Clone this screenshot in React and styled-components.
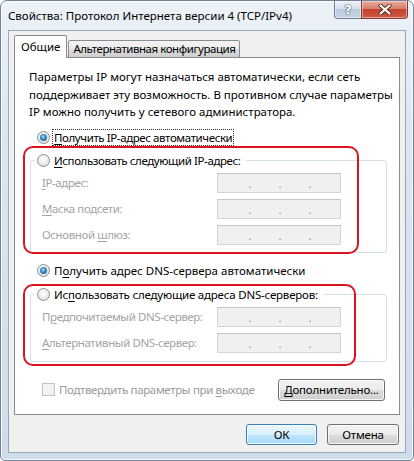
import React from "react";
import styled, { createGlobalStyle } from "styled-components";

const GlobalStyle = createGlobalStyle`
  html, body {
    margin: 0;
    padding: 0;
    background: #ffffff;
  }
  body {
    font-family: "Noto Sans", "Segoe UI", sans-serif;
    font-size: 11.5px;
    color: #000;
  }
`;

const Window = styled.div`
  width: 414px;
  height: 461px;
  box-sizing: border-box;
  display: flex;
  flex-direction: column;
  padding: 0 7px 7px 7px;
  border: 1px solid #6f8299;
  border-radius: 7px 7px 5px 5px;
  background: linear-gradient(to bottom, #edf2f8 0%, #dce6f1 30%, #cfdcea 100%);
  box-shadow: inset 0 0 0 1px rgba(255, 255, 255, 0.75);
  overflow: hidden;
`;

const TitleBar = styled.div`
  height: 29px;
  display: flex;
  justify-content: space-between;
  align-items: flex-start;
  flex-shrink: 0;
`;

const Title = styled.div`
  padding-top: 7px;
  font-size: 11.5px;
  line-height: 16px;
  color: #000;
  white-space: nowrap;
`;

const Controls = styled.div`
  display: flex;
  margin-right: -2px;
`;

const CaptionButton = styled.div`
  width: ${(p) => p.$w}px;
  height: 18px;
  box-sizing: border-box;
  border: 1px solid ${(p) => (p.$close ? "#7d3b33" : "#6f7f93")};
  border-top: none;
  border-radius: ${(p) => (p.$close ? "0 0 4px 0" : "0 0 0 4px")};
  margin-left: -1px;
  display: flex;
  align-items: center;
  justify-content: center;
  background: ${(p) =>
    p.$close
      ? "linear-gradient(to bottom, #e9a999 0%, #d7806d 45%, #c2442f 50%, #cf5a3f 100%)"
      : "linear-gradient(to bottom, #eef3f9 0%, #d6e1ee 45%, #bccbdd 50%, #c9d7e7 100%)"};
  box-shadow: inset 0 0 0 1px rgba(255, 255, 255, 0.45);
  color: #fff;
  font-family: "DejaVu Sans", sans-serif;
  font-weight: bold;
  font-size: 13px;
  text-shadow: 0 0 2px #3c4a5c, 0 0 1px #3c4a5c;
`;

const Client = styled.div`
  flex: 1;
  display: flex;
  flex-direction: column;
  background: #f0f0f0;
  border: 1px solid #97a8bc;
  padding: 4px 5px 7px 5px;
  min-height: 0;
`;

const TabStrip = styled.div`
  display: flex;
  align-items: flex-end;
  height: 23px;
  margin-bottom: -1px;
  position: relative;
  z-index: 1;
`;

const Tab = styled.div`
  box-sizing: border-box;
  height: ${(p) => (p.$active ? 23 : 18)}px;
  padding: 0 ${(p) => (p.$active ? 6 : 4)}px;
  margin-left: ${(p) => (p.$active ? 0 : 1)}px;
  border: 1px solid #898c95;
  border-bottom: ${(p) => (p.$active ? "none" : "1px solid #898c95")};
  border-radius: 2px 2px 0 0;
  background: ${(p) =>
    p.$active ? "#ffffff" : "linear-gradient(to bottom, #f3f3f3 0%, #ebebeb 50%, #dddddd 51%, #cfcfcf 100%)"};
  display: flex;
  align-items: center;
  line-height: 14px;
  white-space: nowrap;
  letter-spacing: ${(p) => (p.$active ? 0 : -0.45)}px;
`;

const Panel = styled.div`
  position: relative;
  flex: 1;
  background: #ffffff;
  border: 1px solid #898c95;
  padding: 10px 12px 0 14px;
  display: flex;
  flex-direction: column;
`;

const Intro = styled.p`
  margin: 0;
  line-height: 17.5px;
  white-space: nowrap;
`;

const RadioRow = styled.div`
  display: flex;
  align-items: center;
  height: 17px;
  margin-top: ${(p) => p.$mt || 0}px;
  margin-left: 8px;
`;

const Radio = styled.span`
  width: 13px;
  height: 13px;
  box-sizing: border-box;
  border-radius: 50%;
  border: 1px solid #8c8f94;
  background: radial-gradient(circle at 50% 40%, #ffffff 0%, #eeeeee 45%, #cfd3d8 100%);
  display: flex;
  align-items: center;
  justify-content: center;
  flex-shrink: 0;

  &::after {
    content: "";
    display: ${(p) => (p.$checked ? "block" : "none")};
    width: 7px;
    height: 7px;
    border-radius: 50%;
    background: radial-gradient(circle at 45% 40%, #9fe0f8 0%, #3a8fc8 40%, #17426d 100%);
  }
`;

const RadioText = styled.span`
  margin-left: 2px;
  padding: 0 1px;
  line-height: 15px;
  border: 1px ${(p) => (p.$focus ? "dotted #333" : "solid transparent")};
  white-space: nowrap;
  letter-spacing: ${(p) => p.$ls || 0}px;
`;

const Key = styled.u`
  text-decoration: underline;
  text-underline-offset: 2px;
`;

const Group = styled.div`
  margin: ${(p) => p.$mt}px 0 0 1px;
  border: 1px solid #d5dfe5;
  border-radius: 3px;
  padding: 0 0 ${(p) => p.$pb}px 11px;
  display: flex;
  flex-direction: column;
  gap: 6px;
`;

const Legend = styled.div`
  align-self: flex-start;
  display: flex;
  align-items: center;
  height: 17px;
  margin: -9px 0 -2px -7px;
  padding: 0 4px 0 2px;
  background: #ffffff;
`;

const FieldRow = styled.div`
  display: flex;
  align-items: center;
  height: 20px;
`;

const FieldLabel = styled.span`
  width: 175px;
  color: #a3a3a3;
  white-space: nowrap;
  letter-spacing: -0.4px;
`;

const IpBox = styled.div`
  width: 124px;
  height: 20px;
  box-sizing: border-box;
  border: 1px solid #d4d4d4;
  border-top-color: #c6c6c6;
  background: #f0f0f0;
  display: flex;
  align-items: flex-end;
  padding: 0 0 2px 30px;
  gap: 26px;
`;

const Dot = styled.span`
  width: 4px;
  text-align: center;
  font-size: 11px;
  line-height: 12px;
  color: #8a8a8a;
`;

const BottomRow = styled.div`
  display: flex;
  align-items: center;
  justify-content: space-between;
  margin: 17px 2px 0 13px;
`;

const Check = styled.label`
  display: flex;
  align-items: center;
  color: #9a9a9a;
  white-space: nowrap;
  letter-spacing: -0.35px;
`;

const CheckBox = styled.span`
  width: 13px;
  height: 13px;
  box-sizing: border-box;
  border: 1px solid #c2c2c2;
  background: linear-gradient(135deg, #f7f7f7, #ececec);
  margin-right: 4px;
`;

const Button = styled.div`
  width: ${(p) => p.$w}px;
  height: ${(p) => p.$h || 21}px;
  box-sizing: border-box;
  border: 1px solid ${(p) => (p.$default ? "#3c7fb1" : "#707070")};
  border-radius: 3px;
  background: ${(p) =>
    p.$default
      ? "linear-gradient(to bottom, #eaf6fd 0%, #d9f0fc 50%, #bee6fd 51%, #a7d9f5 100%)"
      : "linear-gradient(to bottom, #f2f2f2 0%, #ebebeb 50%, #dddddd 51%, #cfcfcf 100%)"};
  box-shadow: inset 0 0 0 1px rgba(255, 255, 255, 0.8);
  display: flex;
  align-items: center;
  justify-content: center;
  white-space: nowrap;
  letter-spacing: -0.2px;
`;

const Footer = styled.div`
  display: flex;
  justify-content: flex-end;
  gap: 10px;
  padding: 9px 0 0 0;
  margin-right: 1px;
`;

const Highlight = styled.div`
  position: absolute;
  left: ${(p) => p.$x}px;
  top: ${(p) => p.$y}px;
  width: ${(p) => p.$w}px;
  height: ${(p) => p.$h}px;
  box-sizing: border-box;
  border: 2px solid #d8141f;
  border-radius: 10px;
  pointer-events: none;
`;

const CloseGlyph = () => (
  <svg width="14" height="11" viewBox="0 0 14 11">
    <path d="M2.5 1.5 L11.5 9.5 M11.5 1.5 L2.5 9.5" stroke="#5a2a24" strokeWidth="4" strokeLinecap="round" />
    <path d="M2.5 1.5 L11.5 9.5 M11.5 1.5 L2.5 9.5" stroke="#ffffff" strokeWidth="2.2" strokeLinecap="round" />
  </svg>
);

const IpField = () => (
  <IpBox>
    <Dot>.</Dot>
    <Dot>.</Dot>
    <Dot>.</Dot>
  </IpBox>
);

export default function App() {
  return (
    <>
      <GlobalStyle />
      <Window>
        <TitleBar>
          <Title>Свойства: Протокол Интернета версии 4 (TCP/IPv4)</Title>
          <Controls>
            <CaptionButton $w={28}>?</CaptionButton>
            <CaptionButton $w={47} $close>
              <CloseGlyph />
            </CaptionButton>
          </Controls>
        </TitleBar>

        <Client>
          <TabStrip>
            <Tab $active>Общие</Tab>
            <Tab>Альтернативная конфигурация</Tab>
          </TabStrip>

          <Panel>
            <Intro>
              Параметры IP могут назначаться автоматически, если сеть
              <br />
              поддерживает эту возможность. В противном случае параметры
              <br />
              IP можно получить у сетевого администратора.
            </Intro>

            <RadioRow $mt={8}>
              <Radio $checked />
              <RadioText $focus $ls={-0.4}>
                <Key>П</Key>олучить IP-адрес автоматически
              </RadioText>
            </RadioRow>

            <Group $mt={14} $pb={7}>
              <Legend>
                <Radio />
                <RadioText $ls={-0.4}>
                  <Key>И</Key>спользовать следующий IP-адрес:
                </RadioText>
              </Legend>
              <FieldRow>
                <FieldLabel>
                  <Key>I</Key>P-адрес:
                </FieldLabel>
                <IpField />
              </FieldRow>
              <FieldRow>
                <FieldLabel>
                  <Key>М</Key>аска подсети:
                </FieldLabel>
                <IpField />
              </FieldRow>
              <FieldRow>
                <FieldLabel>
                  Основной <Key>ш</Key>люз:
                </FieldLabel>
                <IpField />
              </FieldRow>
            </Group>

            <RadioRow $mt={9}>
              <Radio $checked />
              <RadioText>
                П<Key>о</Key>лучить адрес DNS-сервера автоматически
              </RadioText>
            </RadioRow>

            <Group $mt={15} $pb={8}>
              <Legend>
                <Radio />
                <RadioText $ls={-0.2}>
                  Ис<Key>п</Key>ользовать следующие адреса DNS-серверов:
                </RadioText>
              </Legend>
              <FieldRow>
                <FieldLabel>
                  П<Key>р</Key>едпочитаемый DNS-сервер:
                </FieldLabel>
                <IpField />
              </FieldRow>
              <FieldRow>
                <FieldLabel>
                  <Key>А</Key>льтернативный DNS-сервер:
                </FieldLabel>
                <IpField />
              </FieldRow>
            </Group>

            <BottomRow>
              <Check>
                <CheckBox />
                <span>
                  Подтвердить параметры при <Key>в</Key>ыходе
                </span>
              </Check>
              <Button $w={107} $h={22}>
                <span>
                  <Key>Д</Key>ополнительно...
                </span>
              </Button>
            </BottomRow>

            <Highlight $x={8} $y={88} $w={336} $h={108} />
            <Highlight $x={8} $y={226} $w={333} $h={82} />
          </Panel>

          <Footer>
            <Button $w={71} $default>
              ОК
            </Button>
            <Button $w={72}>Отмена</Button>
          </Footer>
        </Client>
      </Window>
    </>
  );
}
